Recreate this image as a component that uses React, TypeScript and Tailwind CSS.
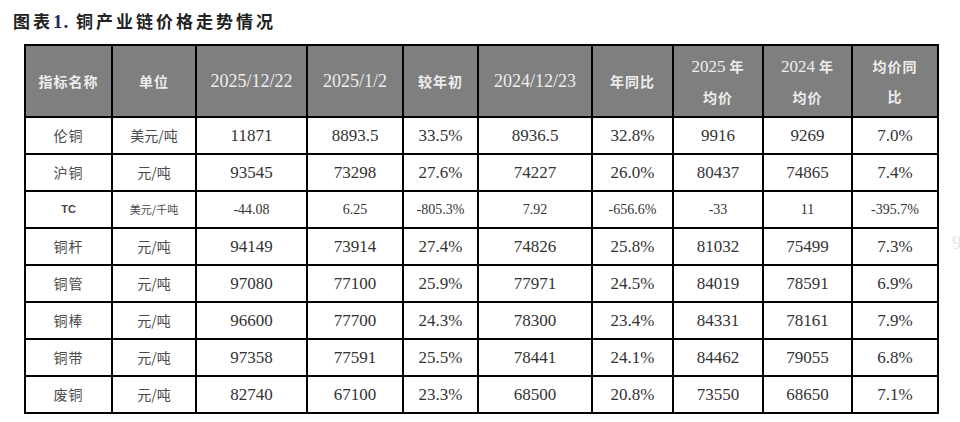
import React, { FC } from 'react';

type Row = {
    name: string;
    unit: string;
    values: string[];
    small?: boolean;
};

const rows: Row[] = [
    { name: '伦铜', unit: '美元/吨', values: ['11871', '8893.5', '33.5%', '8936.5', '32.8%', '9916', '9269', '7.0%'] },
    { name: '沪铜', unit: '元/吨', values: ['93545', '73298', '27.6%', '74227', '26.0%', '80437', '74865', '7.4%'] },
    { name: 'TC', unit: '美元/千吨', values: ['-44.08', '6.25', '-805.3%', '7.92', '-656.6%', '-33', '11', '-395.7%'], small: true },
    { name: '铜杆', unit: '元/吨', values: ['94149', '73914', '27.4%', '74826', '25.8%', '81032', '75499', '7.3%'] },
    { name: '铜管', unit: '元/吨', values: ['97080', '77100', '25.9%', '77971', '24.5%', '84019', '78591', '6.9%'] },
    { name: '铜棒', unit: '元/吨', values: ['96600', '77700', '24.3%', '78300', '23.4%', '84331', '78161', '7.9%'] },
    { name: '铜带', unit: '元/吨', values: ['97358', '77591', '25.5%', '78441', '24.1%', '84462', '79055', '6.8%'] },
    { name: '废铜', unit: '元/吨', values: ['82740', '67100', '23.3%', '68500', '20.8%', '73550', '68650', '7.1%'] },
];

const colWidths = [87, 84, 111, 96, 75, 114, 81, 90, 89, 86];

const cjk = "font-['Noto_Sans_CJK_SC',sans-serif]";
const serif = "font-['Liberation_Serif','Noto_Sans_CJK_SC',serif]";

const HeadCell: FC<{ children: React.ReactNode; date?: boolean }> = ({ children, date }) => (
    <th
        className={`border-2 border-black bg-[#7f7f7f] text-[#ededed] text-center align-middle leading-[30px] ${
            date ? `${serif} font-normal text-[18px]` : `${cjk} font-bold text-[14px] tracking-[1px]`
        }`}
    >
        {children}
    </th>
);

const App: FC = () => {
    return (
        <div className="relative w-[960px] h-[422px] bg-white overflow-hidden">
            <h1 className={`pl-[13px] pt-[10px] text-[17px] font-bold leading-[22px] text-[#222] tracking-[3px] ${cjk}`}>
                图表<span className={`${serif} text-[#1f2a5c] text-[19px] tracking-[1px]`}>1.</span> 铜产业链价格走势情况
            </h1>

            <table className="mt-[11px] ml-[24px] w-[913px] table-fixed border-collapse border-2 border-black">
                <colgroup>
                    {colWidths.map((w, i) => (
                        <col key={i} style={{ width: w }} />
                    ))}
                </colgroup>
                <thead>
                    <tr className="h-[72px]">
                        <HeadCell>指标名称</HeadCell>
                        <HeadCell>单位</HeadCell>
                        <HeadCell date>2025/12/22</HeadCell>
                        <HeadCell date>2025/1/2</HeadCell>
                        <HeadCell>较年初</HeadCell>
                        <HeadCell date>2024/12/23</HeadCell>
                        <HeadCell>年同比</HeadCell>
                        <HeadCell>
                            <span className={`${serif} font-normal text-[17px] tracking-normal`}>2025</span> 年<br />均价
                        </HeadCell>
                        <HeadCell>
                            <span className={`${serif} font-normal text-[17px] tracking-normal`}>2024</span> 年<br />均价
                        </HeadCell>
                        <HeadCell>
                            均价同<br />比
                        </HeadCell>
                    </tr>
                </thead>
                <tbody>
                    {rows.map(row => (
                        <tr key={row.name} className="h-[37px]">
                            <td className={`border-2 border-black text-center text-[#4a4a4a] ${
                                row.small ? "font-['Liberation_Sans',sans-serif] font-bold text-[11px]" : `${cjk} text-[14px] tracking-[1px]`
                            }`}>
                                {row.name}
                            </td>
                            <td className={`border-2 border-black text-center text-[#4a4a4a] ${cjk} ${row.small ? 'text-[11px]' : 'text-[14px]'}`}>
                                {row.unit}
                            </td>
                            {row.values.map((v, i) => (
                                <td
                                    key={i}
                                    className={`border-2 border-black text-center text-[#333] ${serif} ${row.small ? 'text-[14px]' : 'text-[17px]'}`}
                                >
                                    {v}
                                </td>
                            ))}
                        </tr>
                    ))}
                </tbody>
            </table>

            <span className={`absolute left-[952px] top-[229px] text-[19px] text-[#e4e4e4] ${serif}`}>9</span>
        </div>
    );
};

export default App;
